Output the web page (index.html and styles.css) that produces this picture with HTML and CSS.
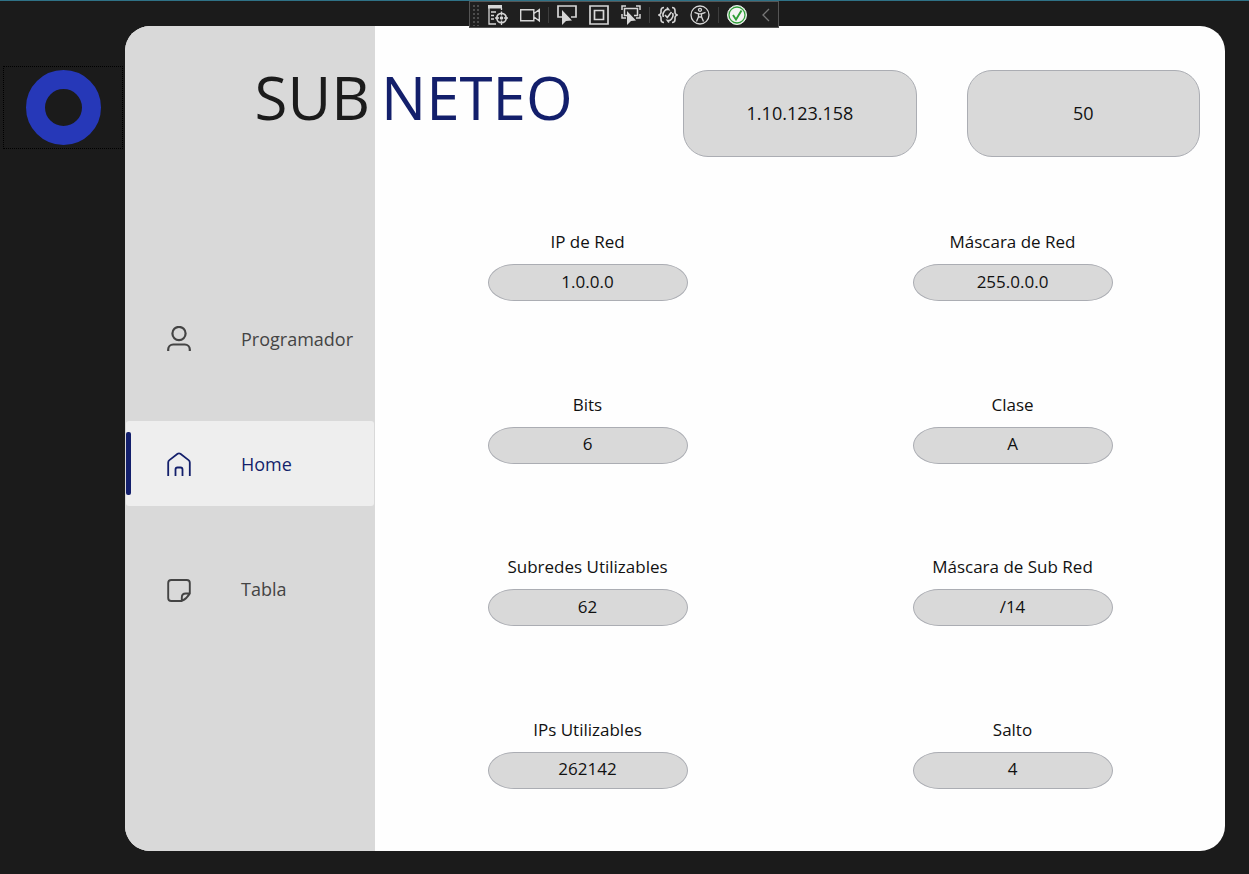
FILE: index.html
```html
<!DOCTYPE html>
<html lang="es">
<head>
<meta charset="utf-8">
<meta name="viewport" content="width=device-width, initial-scale=1">
<title>Subneteo</title>
<link rel="stylesheet" href="styles.css">
</head>
<body>
<div class="window">
  <div class="dock">
    <button class="ring-button" type="button" aria-label="Cerrar"><span class="ring"></span></button>
  </div>
  <div class="app">
    <aside class="sidebar">
      <div class="brand brand-sub">SUB</div>
      <nav class="menu">
        <button class="menu-item" type="button">
          <svg class="menu-icon" viewBox="0 0 24 26" fill="none" stroke="currentColor" stroke-width="2.2"><circle cx="12" cy="7.500" r="6.600"/><path d="M1.200 25v-1.500a5 5 0 0 1 5-5h11.600a5 5 0 0 1 5 5V25"/></svg>
          <span>Programador</span>
        </button>
        <button class="menu-item active" type="button" aria-current="page">
          <svg class="menu-icon" viewBox="0 0 24 26" fill="none" stroke="currentColor" stroke-width="1.800"><path d="M1.200 25V11.500q0-1.500 1.200-2.400l8.200-6.300q1.400-1 2.800 0l8.200 6.300q1.200.9 1.200 2.400V25M8.500 25v-6.500q0-2 2-2h3q2 0 2 2V25"/></svg>
          <span>Home</span>
        </button>
        <button class="menu-item" type="button">
          <svg class="menu-icon" viewBox="0 0 24 26" fill="none" stroke="currentColor" stroke-width="1.900"><path d="M14 25H4.200q-3 0-3-3V7q0-3 3-3h15.600q3 0 3 3v10.500Q20 22.500 14.800 25v-3.500q0-4 4-4h4"/></svg>
          <span>Tabla</span>
        </button>
      </nav>
    </aside>
    <main class="content">
      <header class="top">
        <h1 class="brand brand-neteo">NETEO</h1>
        <input class="entry" type="text" value="1.10.123.158" aria-label="Dirección IP">
        <input class="entry" type="text" value="50" aria-label="Subredes">
      </header>
      <section class="results">
        <div class="result"><label for="ip">IP de Red</label><input id="ip" class="pill" value="1.0.0.0" readonly></div>
        <div class="result"><label for="mask">Máscara de Red</label><input id="mask" class="pill" value="255.0.0.0" readonly></div>
        <div class="result"><label for="bits">Bits</label><input id="bits" class="pill" value="6" readonly></div>
        <div class="result"><label for="class">Clase</label><input id="class" class="pill" value="A" readonly></div>
        <div class="result"><label for="subnets">Subredes Utilizables</label><input id="subnets" class="pill" value="62" readonly></div>
        <div class="result"><label for="submask">Máscara de Sub Red</label><input id="submask" class="pill" value="/14" readonly></div>
        <div class="result"><label for="ips">IPs Utilizables</label><input id="ips" class="pill" value="262142" readonly></div>
        <div class="result"><label for="step">Salto</label><input id="step" class="pill" value="4" readonly></div>
      </section>
    </main>
  </div>
</div>

<div class="debug-bar" role="toolbar" aria-label="Depuración">
  <span class="grip"></span>
  <button class="tool" type="button" aria-label="Árbol visual"><svg viewBox="0 0 20 20" fill="none" stroke="currentColor" stroke-width="1.300"><path d="M0 0h14v3.500H0z" fill="currentColor" stroke="none"/><path d="M1 2v17h7M13.500 3v2M3 7h5M3 10.500h3M3 14h3"/><circle cx="13.500" cy="13" r="4.700" stroke-width="1.700"/><circle cx="13.500" cy="13" r="1.100" fill="currentColor"/><path d="M13.500 6.500v4M13.500 15.500V20M7 13h4M16 13h4"/></svg></button>
  <button class="tool" type="button" aria-label="Grabar"><svg viewBox="0 0 20 20" fill="none" stroke="currentColor" stroke-width="1.400"><path d="M.7 4.700h13.100v11.100H.7zM14 8.500l5.300-3.800v11.100L14 12"/></svg></button>
  <span class="divider"></span>
  <button class="tool" type="button" aria-label="Seleccionar elemento"><svg viewBox="0 0 20 20" fill="none" stroke="currentColor" stroke-width="1.700"><path d="M5 12H1V1h18v11h-5"/><path d="M5 5v15l4-4 6-.5z" fill="currentColor" stroke="none"/></svg></button>
  <button class="tool" type="button" aria-label="Adornos de diseño"><svg viewBox="0 0 20 20" fill="none" stroke="currentColor" stroke-width="1.700"><path d="M1 1h18v18H1zM5.500 5.500h9v9h-9z"/></svg></button>
  <button class="tool" type="button" aria-label="Seguir elemento"><svg viewBox="0 0 20 20" fill="none" stroke="currentColor" stroke-width="1.500"><path d="M1 5V1h4M15 1h4v4M1 9v4h4M19 9v4h-4M6 10.500H3.500v-7h13v7H13"/><path d="M6 6v14l4-4 5-.5z" fill="currentColor" stroke="none"/></svg></button>
  <span class="divider"></span>
  <button class="tool" type="button" aria-label="Recarga activa"><svg viewBox="0 0 20 20" fill="none" stroke="currentColor" stroke-width="1.600"><path d="M6 2.500Q3 2.500 3 5.500v2q0 1.500-2 2.500 2 1 2 2.500v2q0 3 3 3M14 2.500q3 0 3 3v2q0 1.500 2 2.500-2 1-2 2.500v2q0 3-3 3M6.500 6Q8 4 10.500 4.500L9 2.500M13.500 14Q12 16 9.500 15.500l1.500 2M5.500 12q-1.500-3 1-6M14.500 8q1.500 3-1 6"/><path d="M7 10l2.300 2.500L13.500 7"/></svg></button>
  <button class="tool" type="button" aria-label="Accesibilidad"><svg viewBox="0 0 20 20" fill="none" stroke="currentColor" stroke-width="1.300"><circle cx="10" cy="10" r="9"/><circle cx="10" cy="4.800" r="1.500"/><path d="M4.500 7.300l4 1.500v3L6.500 16.500M15.500 7.300l-4 1.500v3l2 4.700M8.500 8.800h3M8.500 12h3"/></svg></button>
  <span class="divider"></span>
  <button class="tool" type="button" aria-label="Sin errores de enlace"><svg viewBox="0 0 20 20" fill="none" stroke="#2f9e38"><circle cx="10" cy="10" r="9.500" fill="#f4f4f4" stroke="#e8f1e8"/><circle cx="10" cy="10" r="8" stroke-width="1.300"/><path d="M6 10l3 4.500L14.500 5.500" stroke-width="1.900"/></svg></button>
  <button class="tool collapse" type="button" aria-label="Contraer"><svg viewBox="0 0 20 20" fill="none" stroke="#777" stroke-width="1.300"><path d="M13 4l-6 6 6 6"/></svg></button>
</div>
</body>
</html>
```
FILE: styles.css
```css
* { box-sizing: border-box; }

body {
  margin: 0;
  background: #1b1b1b;
  color: #111;
  font-family: "Open Sans", "Noto Sans", sans-serif;
  font-size: 17px;
}

button, input {
  font: inherit;
  color: inherit;
  margin: 0;
}

button {
  border: 0;
  background: none;
  padding: 0;
}

.window {
  display: grid;
  grid-template-columns: 125px 1fr;
  min-height: 100vh;
  padding: 25px 24px 23px 0;
  border-top: 1px solid #2f7287;
}

.dock { padding: 40px 2px 0 3px; }

.ring-button {
  display: grid;
  place-items: center;
  width: 100%;
  height: 83px;
  border: 1px dotted #000;
}

.ring {
  width: 75px;
  height: 75px;
  border: 19px solid #2638b8;
  border-radius: 50%;
}

.app {
  display: grid;
  grid-template-columns: 5fr 17fr;
  border-radius: 25px;
  overflow: hidden;
  background: #fefefe;
}

.sidebar {
  display: grid;
  grid-template-rows: 10fr 15fr 8fr;
  background: #d9d9d9;
}

.brand {
  margin: 0;
  padding-top: 31px;
  font-size: 60px;
  font-weight: 400;
  line-height: 80px;
}

.brand-sub {
  padding-right: 5px;
  text-align: right;
  color: #1b1b1b;
}

.brand-neteo {
  align-self: start;
  padding-left: 6px;
  color: #131f6b;
}

.menu {
  display: grid;
  grid-template-rows: repeat(3, 1fr);
  align-items: center;
  padding: 0 1px;
}

.menu-item {
  display: flex;
  align-items: center;
  gap: 50px;
  height: 85px;
  padding-left: 36px;
  border-left: 5px solid transparent;
  border-radius: 3px;
  color: #444;
  font-size: 18px;
}

.menu-item.active {
  position: relative;
  background: #eee;
  color: #131f6b;
}

.menu-item.active::before {
  content: "";
  position: absolute;
  top: 11px;
  bottom: 11px;
  left: -5px;
  width: 5px;
  border-radius: 2px;
  background: #131f6b;
}

.menu-icon {
  width: 24px;
  height: 26px;
}

.content {
  display: grid;
  grid-template-rows: 7fr 26fr;
}

.top {
  display: grid;
  grid-template-columns: repeat(3, 1fr);
  align-items: center;
}

.entry {
  justify-self: stretch;
  min-width: 0;
  height: 87px;
  margin: 0 25px;
  padding: 0 8px 2px;
  border: 1px solid #abadb3;
  border-radius: 25px;
  background: #d9d9d9;
  text-align: center;
  font-size: 18px;
}

.results {
  display: grid;
  grid-template-columns: 1fr 1fr;
  grid-template-rows: repeat(4, 1fr);
}

.result {
  display: flex;
  flex-direction: column;
  align-items: center;
  gap: 10px;
  padding-top: 29px;
}

.result label { line-height: 24px; }

.pill {
  width: 200px;
  height: 37px;
  padding: 0 8px 3px;
  border: 1px solid #abadb3;
  border-radius: 26px / 50%;
  background: #d9d9d9;
  text-align: center;
}

.debug-bar {
  position: absolute;
  top: 1px;
  left: 469px;
  display: flex;
  align-items: center;
  height: 27px;
  padding-left: 2px;
  border: 1px solid #555;
  background: #1f1f1f;
  color: #d6d6d6;
}

.grip {
  width: 8px;
  height: 22px;
  margin-right: 2px;
  background: radial-gradient(circle, #4c4c4c 1px, transparent 1px) 0 0 / 4px 4px;
}

.tool {
  display: grid;
  place-items: center;
  width: 32px;
  height: 25px;
}

.tool svg {
  width: 20px;
  height: 20px;
}

.tool.collapse { width: 25px; }

.divider {
  width: 1px;
  height: 16px;
  margin: 0 2px;
  background: #3d3d3d;
}
```
